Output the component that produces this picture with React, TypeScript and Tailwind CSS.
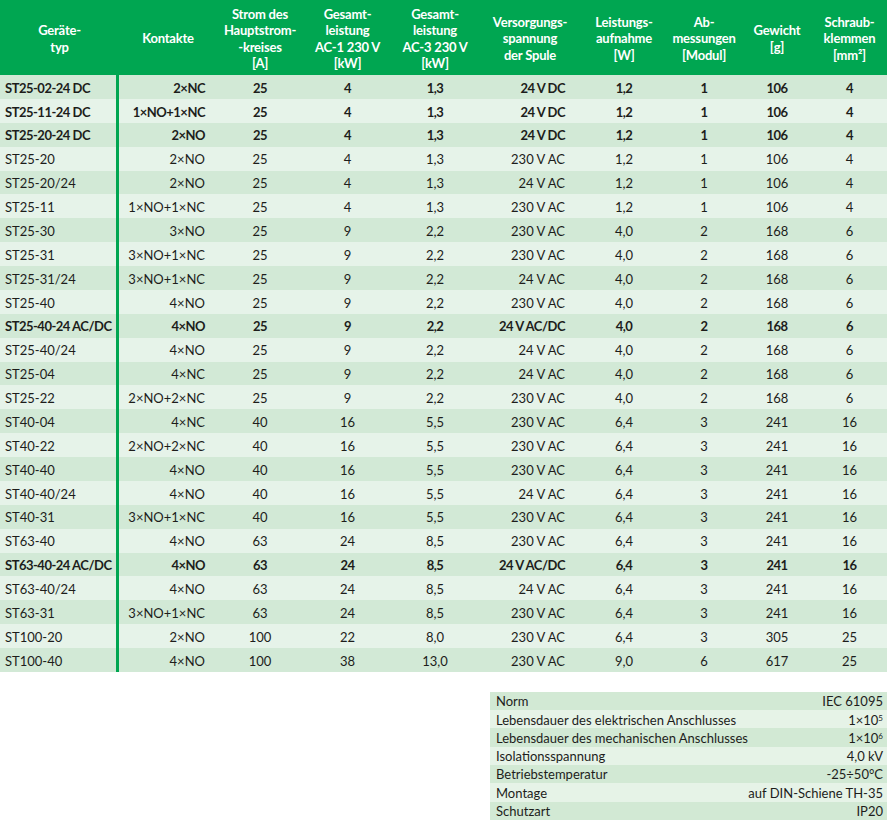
const rows: string[][] = [
  ['ST25-02-24 DC', '2×NC', '25', '4', '1,3', '24 V DC', '1,2', '1', '106', '4', 'b'],
  ['ST25-11-24 DC', '1×NO+1×NC', '25', '4', '1,3', '24 V DC', '1,2', '1', '106', '4', 'b'],
  ['ST25-20-24 DC', '2×NO', '25', '4', '1,3', '24 V DC', '1,2', '1', '106', '4', 'b'],
  ['ST25-20', '2×NO', '25', '4', '1,3', '230 V AC', '1,2', '1', '106', '4', ''],
  ['ST25-20/24', '2×NO', '25', '4', '1,3', '24 V AC', '1,2', '1', '106', '4', ''],
  ['ST25-11', '1×NO+1×NC', '25', '4', '1,3', '230 V AC', '1,2', '1', '106', '4', ''],
  ['ST25-30', '3×NO', '25', '9', '2,2', '230 V AC', '4,0', '2', '168', '6', ''],
  ['ST25-31', '3×NO+1×NC', '25', '9', '2,2', '230 V AC', '4,0', '2', '168', '6', ''],
  ['ST25-31/24', '3×NO+1×NC', '25', '9', '2,2', '24 V AC', '4,0', '2', '168', '6', ''],
  ['ST25-40', '4×NO', '25', '9', '2,2', '230 V AC', '4,0', '2', '168', '6', ''],
  ['ST25-40-24 AC/DC', '4×NO', '25', '9', '2,2', '24 V AC/DC', '4,0', '2', '168', '6', 'b'],
  ['ST25-40/24', '4×NO', '25', '9', '2,2', '24 V AC', '4,0', '2', '168', '6', ''],
  ['ST25-04', '4×NC', '25', '9', '2,2', '24 V AC', '4,0', '2', '168', '6', ''],
  ['ST25-22', '2×NO+2×NC', '25', '9', '2,2', '230 V AC', '4,0', '2', '168', '6', ''],
  ['ST40-04', '4×NC', '40', '16', '5,5', '230 V AC', '6,4', '3', '241', '16', ''],
  ['ST40-22', '2×NO+2×NC', '40', '16', '5,5', '230 V AC', '6,4', '3', '241', '16', ''],
  ['ST40-40', '4×NO', '40', '16', '5,5', '230 V AC', '6,4', '3', '241', '16', ''],
  ['ST40-40/24', '4×NO', '40', '16', '5,5', '24 V AC', '6,4', '3', '241', '16', ''],
  ['ST40-31', '3×NO+1×NC', '40', '16', '5,5', '230 V AC', '6,4', '3', '241', '16', ''],
  ['ST63-40', '4×NO', '63', '24', '8,5', '230 V AC', '6,4', '3', '241', '16', ''],
  ['ST63-40-24 AC/DC', '4×NO', '63', '24', '8,5', '24 V AC/DC', '6,4', '3', '241', '16', 'b'],
  ['ST63-40/24', '4×NO', '63', '24', '8,5', '24 V AC', '6,4', '3', '241', '16', ''],
  ['ST63-31', '3×NO+1×NC', '63', '24', '8,5', '230 V AC', '6,4', '3', '241', '16', ''],
  ['ST100-20', '2×NO', '100', '22', '8,0', '230 V AC', '6,4', '3', '305', '25', ''],
  ['ST100-40', '4×NO', '100', '38', '13,0', '230 V AC', '9,0', '6', '617', '25', ''],
]

const headers = [
  ['Geräte-', 'typ'],
  ['Kontakte'],
  ['Strom des', 'Hauptstrom-', '-kreises', '[A]'],
  ['Gesamt-', 'leistung', 'AC-1 230 V', '[kW]'],
  ['Gesamt-', 'leistung', 'AC-3 230 V', '[kW]'],
  ['Versorgungs-', 'spannung', 'der Spule'],
  ['Leistungs-', 'aufnahme', '[W]'],
  ['Ab-', 'messungen', '[Modul]'],
  ['Gewicht', '[g]'],
  ['Schraub-', 'klemmen', '[mm²]'],
]

// per column alignment in the body
const cellCls = [
  'justify-start pl-[5px] border-r-[3px] border-[#00a651]',
  'justify-end pr-[12px]',
  'justify-center',
  'justify-center',
  'justify-center',
  'justify-end pr-[17px]',
  'justify-center',
  'justify-center',
  'justify-center',
  'justify-center',
]

const grid = 'grid grid-cols-[119px_98px_86px_89px_86px_104px_84px_76px_70px_75px]'

const specs: [string, React.ReactNode][] = [
  ['Norm', 'IEC 61095'],
  ['Lebensdauer des elektrischen Anschlusses', <>1×10<sup className="text-[8px]">5</sup></>],
  ['Lebensdauer des mechanischen Anschlusses', <>1×10<sup className="text-[8px]">6</sup></>],
  ['Isolationsspannung', '4,0 kV'],
  ['Betriebstemperatur', '-25÷50°C'],
  ['Montage', 'auf DIN-Schiene TH-35'],
  ['Schutzart', 'IP20'],
]

export default function App() {
  return (
    <div className="w-[887px] h-[822px] bg-white font-['Lato',sans-serif] text-[#1d1d1b] text-[13px] overflow-hidden">
      {/* Header */}
      <div className={`${grid} h-[75px] bg-[#00a651] text-white font-bold text-[13px] leading-[16.4px] tracking-[-0.2px]`}>
        {headers.map((lines, i) => (
          <div key={i} className="flex flex-col items-center justify-center text-center pt-[2px] whitespace-nowrap">
            {lines.map((l) => (
              <span key={l}>{l}</span>
            ))}
          </div>
        ))}
      </div>

      {/* Body */}
      {rows.map((r, i) => (
        <div
          key={r[0]}
          className={`${grid} h-[23.88px] whitespace-nowrap ${i % 2 === 0 ? 'bg-[#d2e9d6]' : 'bg-[#e6f3e9]'} ${r[10] ? 'font-bold tracking-[-0.5px]' : ''}`}
        >
          {r.slice(0, 10).map((v, j) => (
            <div key={j} className={`flex items-center pt-[3px] ${cellCls[j]}`}>
              {v}
            </div>
          ))}
        </div>
      ))}

      {/* Specs */}
      <div className="ml-auto mt-[20px] w-[397px]">
        {specs.map(([k, v], i) => (
          <div
            key={k}
            className={`flex h-[18.3px] items-center justify-between pl-[6px] pr-[4px] pt-[2px] ${i % 2 === 0 ? 'bg-[#d2e9d4]' : 'bg-[#e6f3e7]'}`}
          >
            <span>{k}</span>
            <span>{v}</span>
          </div>
        ))}
      </div>
    </div>
  )
}
